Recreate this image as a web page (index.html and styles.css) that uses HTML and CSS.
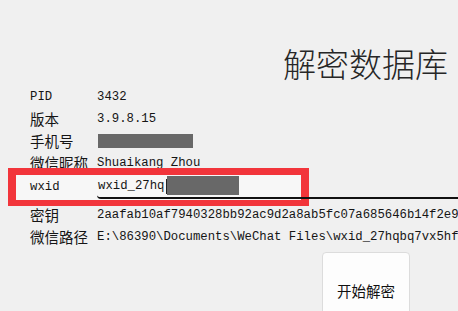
FILE: index.html
```html
<!DOCTYPE html>
<html lang="zh-CN">
<head>
    <meta charset="UTF-8" />
    <title>解密数据库</title>
    <link rel="stylesheet" href="styles.css">
</head>
<body>

<header class="title">解密数据库</header>

<main class="info">
    <div class="row">
        <span class="label">PID</span>
        <span class="value">3432</span>
    </div>
    <div class="row">
        <span class="label cjk">版本</span>
        <span class="value">3.9.8.15</span>
    </div>
    <div class="row">
        <span class="label cjk">手机号</span>
        <span class="value"><span class="redact phone"></span></span>
    </div>
    <div class="row">
        <span class="label cjk">微信昵称</span>
        <span class="value">Shuaikang Zhou</span>
    </div>
    <div class="row row-wxid">
        <div class="mark"></div>
        <span class="label">wxid</span>
        <div class="field">wxid_27hq<span class="caret"></span><span class="redact wxid"></span></div>
    </div>
    <div class="row">
        <span class="label cjk">密钥</span>
        <span class="value">2aafab10af7940328bb92ac9d2a8ab5fc07a685646b14f2e9c</span>
    </div>
    <div class="row">
        <span class="label cjk">微信路径</span>
        <span class="value">E:\86390\Documents\WeChat Files\wxid_27hqbq7vx5hf22</span>
    </div>
</main>

<div class="actions">
    <button class="btn">开始解密</button>
</div>

</body>
</html>
```

FILE: styles.css
```css
html, body {
    margin: 0;
    padding: 0;
    height: 100%;
    overflow: hidden;
}
body {
    background: #f0f0f0;
    color: #151515;
    font-family: "Liberation Mono", "Noto Sans CJK SC", monospace;
    font-size: 12.3px;
    white-space: nowrap;
}
.title {
    text-align: right;
    padding: 41px 10px 0 0;
    height: 45px;
    font-family: "Noto Sans CJK SC", sans-serif;
    font-weight: 300;
    font-size: 33px;
    line-height: 45px;
    color: #262626;
}
.info {
    padding-left: 30px;
}
.row {
    display: flex;
    align-items: center;
    height: 22px;
    line-height: 22px;
}
.label {
    width: 67px;
    flex: none;
}
.cjk {
    font-family: "Noto Sans CJK SC", sans-serif;
    font-size: 14.5px;
}
.value {
    flex: none;
}
.redact {
    display: inline-block;
    background: #686868;
    vertical-align: middle;
}
.phone {
    width: 95px;
    height: 14px;
    margin-left: 1px;
}

/* wxid row with the red annotation box */
.row-wxid {
    position: relative;
    height: 30px;
    align-items: flex-start;
}
.row-wxid .label {
    position: relative;
    line-height: 26px;
}
.mark {
    position: absolute;
    left: -22px;
    top: -6px;
    width: 285px;
    height: 25px;
    border: 8px solid #f2353b;
    border-top-width: 7px;
    border-bottom-width: 6px;
    background: #f7f7f7;
}
.field {
    position: relative;
    z-index: 1;
    flex: none;
    display: flex;
    align-items: center;
    box-sizing: border-box;
    width: 400px;
    height: 23px;
    margin-top: 2px;
    padding-left: 1px;
    line-height: 21px;
    border-bottom: 2px solid #111;
    border-bottom-left-radius: 4px;
}
.caret {
    display: inline-block;
    width: 1px;
    height: 15px;
    background: #222;
    margin-left: 2px;
}
.wxid {
    width: 72px;
    height: 19px;
    margin-top: -2px;
}

.actions {
    padding: 4px 0 0 322px;
}
.btn {
    width: 88px;
    height: 76px;
    padding: 0;
    background: #fdfdfd;
    border: 1px solid #dcdcdc;
    border-radius: 4px;
    font-family: "Noto Sans CJK SC", sans-serif;
    font-size: 14.5px;
    color: #111;
}
```
